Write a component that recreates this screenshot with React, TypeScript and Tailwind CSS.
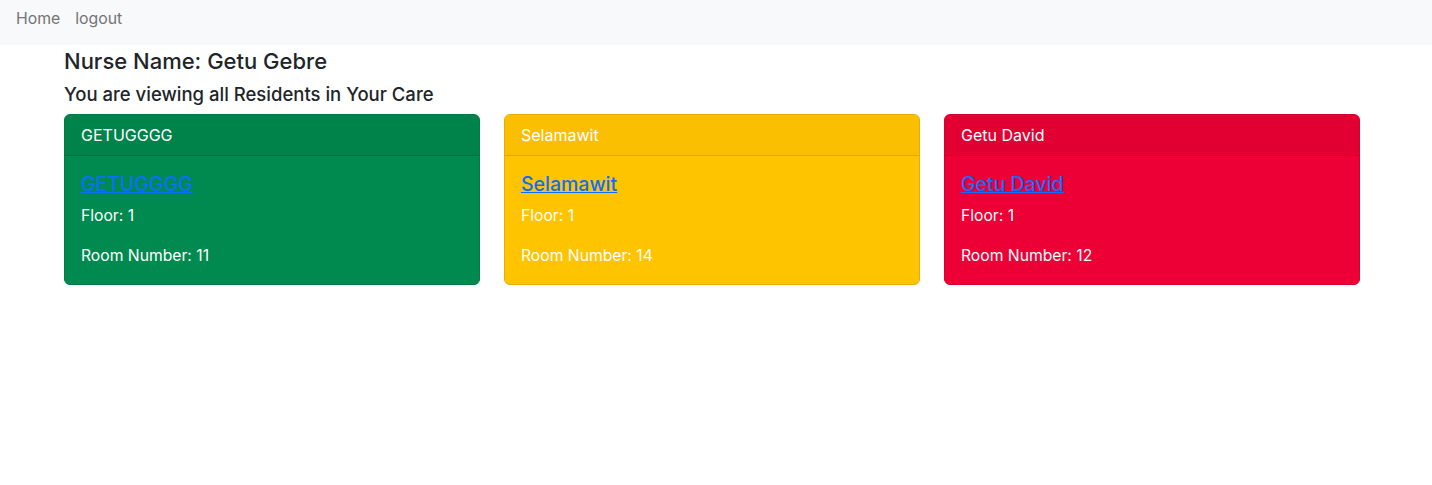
const residents = [
  { id: 1, name: 'GETUGGGG', floor: 1, room: 11, color: 'green' },
  { id: 2, name: 'Selamawit', floor: 1, room: 14, color: 'yellow' },
  { id: 3, name: 'Getu David', floor: 1, room: 12, color: 'red' },
];

const cardStyles: Record<string, { card: string; header: string }> = {
  green: { card: 'bg-[#008a4f] border-[#007a45]', header: 'bg-[#00834b] border-[#00723f]' },
  yellow: { card: 'bg-[#ffc400] border-[#e6ae00]', header: 'bg-[#fabf00] border-[#e0aa00]' },
  red: { card: 'bg-[#ec0035] border-[#d4002f]', header: 'bg-[#e20033] border-[#c9002d]' },
};

function ResidentCard({ name, floor, room, color }: { name: string; floor: number; room: number; color: string }) {
  const s = cardStyles[color];
  return (
    <div className={`w-[416px] rounded-[6px] border text-white ${s.card}`}>
      <div className={`px-4 py-2 leading-6 border-b rounded-t-[5px] ${s.header}`}>{name}</div>
      <div className="p-4 text-[15.7px]">
        <h5 className="text-[19.5px] leading-6 mb-2 font-medium">
          <a href="#" className="text-[#0d6efd] underline">
            {name}
          </a>
        </h5>
        <p className="leading-6 mb-4">Floor: {floor}</p>
        <p className="leading-6">Room Number: {room}</p>
      </div>
    </div>
  );
}

export default function App() {
  return (
    <div className="min-h-[485px] bg-white text-[#212529] text-[16px]" style={{ fontFamily: 'Inter, "Noto Sans", sans-serif' }}>
      <nav className="h-[45px] bg-[#f8f9fa] flex items-start pt-[7px] px-4 gap-[15px] text-[#737475] text-[15.8px] leading-6">
        <a href="#">Home</a>
        <a href="#">logout</a>
      </nav>
      <div className="px-16 pt-[4px]">
        <h4 className="text-[22px] leading-6 font-medium">Nurse Name: Getu Gebre</h4>
        <h5 className="text-[18.5px] leading-6 font-medium mt-[9px] mb-[8px]">You are viewing all Residents in Your Care</h5>
        <div className="flex gap-6">
          {residents.map((r) => (
            <ResidentCard key={r.id} name={r.name} floor={r.floor} room={r.room} color={r.color} />
          ))}
        </div>
      </div>
    </div>
  );
}
